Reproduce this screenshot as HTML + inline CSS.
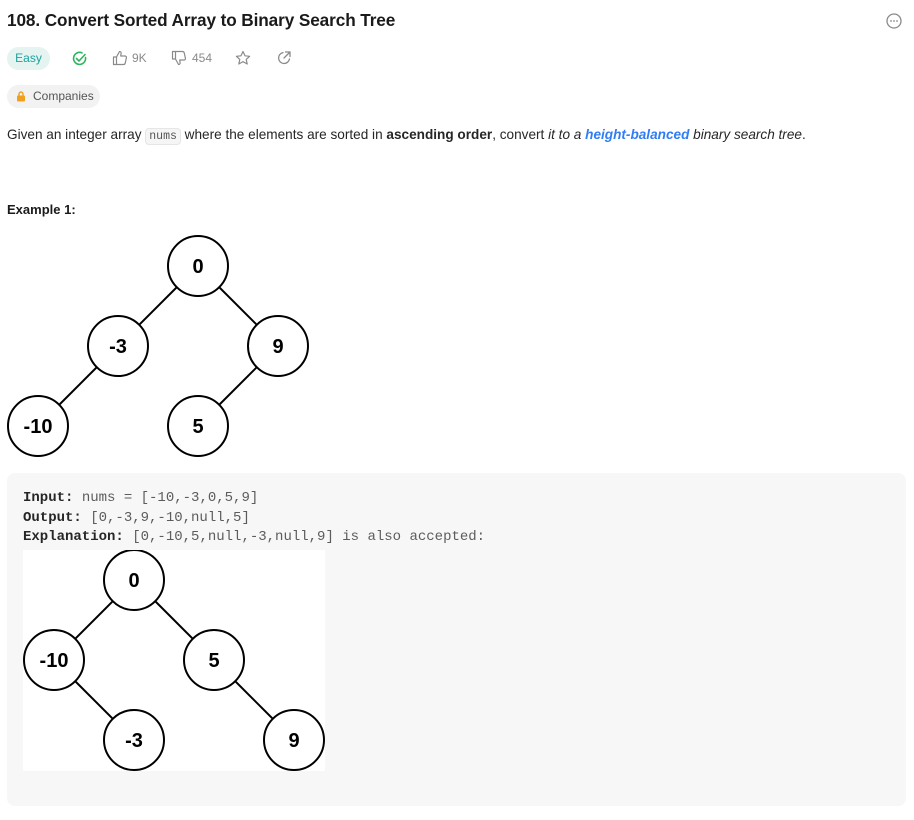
<!DOCTYPE html>
<html><head><meta charset="utf-8"><style>
body{margin:0;background:#fff;font-family:"Liberation Sans",sans-serif;color:#262626;width:914px;height:820px;position:relative;overflow:hidden}
.a{position:absolute}
.title{left:7px;top:10px;font-size:17.2px;font-weight:bold;color:#1a1a1a;letter-spacing:-0.1px}
.easy{left:7px;top:47px;width:43px;height:23px;border-radius:12px;background:#e5f4f0;color:#1ba39c;font-size:12px;line-height:23px;text-align:center}
.ic{color:#8a8a8a;font-size:12px}
.comp{left:7px;top:85px;width:93px;height:23px;border-radius:12px;background:#f2f2f2;font-size:12px;line-height:23px;color:#555}
p{margin:0}
.desc{left:7px;top:127px;font-size:13.6px;white-space:nowrap}
code{font-family:"Liberation Mono",monospace;font-size:11.5px;background:#f5f5f5;border:1px solid #e6e6e6;border-radius:4px;padding:1px 3px;color:#555}
.ex{left:7px;top:202px;font-size:13px;font-weight:bold;color:#1a1a1a}
.pre{left:7px;top:473px;width:899px;height:333px;background:#f7f7f7;border-radius:8px}
.mono{font-family:"Liberation Mono",monospace;font-size:14px;line-height:19.6px;color:#5c5c5c;white-space:pre}
.mono b{color:#262626}
svg text{font-family:"Liberation Sans",sans-serif;font-weight:bold;font-size:20px}
</style></head><body>
<div class="a title">108. Convert Sorted Array to Binary Search Tree</div>
<svg class="a" style="left:885px;top:12px" width="18" height="18" viewBox="0 0 18 18"><circle cx="9" cy="9" r="7" fill="none" stroke="#8a8a8a" stroke-width="1.3"/><circle cx="6" cy="9" r="0.9" fill="#8a8a8a"/><circle cx="9" cy="9" r="0.9" fill="#8a8a8a"/><circle cx="12" cy="9" r="0.9" fill="#8a8a8a"/></svg>
<div class="a easy">Easy</div>
<svg class="a" style="left:71px;top:50px" width="17" height="17" viewBox="0 0 17 17"><path d="M14.5 7.5A6 6 0 1 1 11 2.9" fill="none" stroke="#2db55d" stroke-width="1.6" stroke-linecap="round"/><path d="M5.5 8.5l2.5 2.5 6-6.5" fill="none" stroke="#2db55d" stroke-width="1.6" stroke-linecap="round" stroke-linejoin="round"/></svg>
<svg class="a" style="left:112px;top:50px" width="16" height="16" viewBox="0 0 16 16"><path d="M1.5 7h3v7.5h-3zM4.5 7l3-5.5c1.3 0 1.8.8 1.6 2L8.7 6h4.3c1 0 1.6.8 1.4 1.8l-1.2 5.4c-.2.8-.8 1.3-1.6 1.3H4.5" fill="none" stroke="#8a8a8a" stroke-width="1.2" stroke-linejoin="round"/></svg>
<div class="a ic" style="left:132px;top:51px">9K</div>
<svg class="a" style="left:171px;top:50px" width="16" height="16" viewBox="0 0 16 16"><path d="M1.5 1.5h3V9h-3zM4.5 9l3 5.5c1.3 0 1.8-.8 1.6-2L8.7 10h4.3c1 0 1.6-.8 1.4-1.8L13.2 2.8c-.2-.8-.8-1.3-1.6-1.3H4.5" fill="none" stroke="#8a8a8a" stroke-width="1.2" stroke-linejoin="round"/></svg>
<div class="a ic" style="left:192px;top:51px">454</div>
<svg class="a" style="left:235px;top:50px" width="16" height="16" viewBox="0 0 16 16"><path d="M8 1.5l2 4.3 4.6.5-3.4 3.1 1 4.6L8 11.6 3.8 14l1-4.6L1.4 6.3 6 5.8z" fill="none" stroke="#8a8a8a" stroke-width="1.2" stroke-linejoin="round"/></svg>
<svg class="a" style="left:276px;top:50px" width="16" height="16" viewBox="0 0 16 16"><path d="M13.5 9A5.5 5.5 0 1 1 7 2.6" fill="none" stroke="#8a8a8a" stroke-width="1.3" stroke-linecap="round"/><path d="M9.5 2h4.5v4.5M14 2L8 8" fill="none" stroke="#8a8a8a" stroke-width="1.3" stroke-linecap="round"/></svg>
<div class="a comp"><svg style="position:absolute;left:9px;top:6px" width="10" height="11" viewBox="0 0 10 11"><rect x="1" y="4.5" width="8" height="6" rx="1" fill="#f0a020"/><path d="M3 4.5V3a2 2 0 0 1 4 0v1.5" fill="none" stroke="#f0a020" stroke-width="1.4"/></svg><span style="position:absolute;left:26px">Companies</span></div>
<div class="a desc">Given an integer array <code>nums</code> where the elements are sorted in <b>ascending order</b>, convert <i>it to a</i> <b style="color:#2f7ef5"><i>height-balanced</i></b> <i>binary search tree</i>.</div>
<div class="a ex">Example 1:</div>
<svg class="a" style="left:0;top:230px" width="320" height="232" viewBox="0 230 320 232" stroke="#000" stroke-width="2" fill="#fff">
<line x1="198" y1="266" x2="118" y2="346"/><line x1="198" y1="266" x2="278" y2="346"/><line x1="118" y1="346" x2="38" y2="426"/><line x1="278" y1="346" x2="198" y2="426"/>
<circle cx="198" cy="266" r="30"/><circle cx="118" cy="346" r="30"/><circle cx="278" cy="346" r="30"/><circle cx="38" cy="426" r="30"/><circle cx="198" cy="426" r="30"/>
<g fill="#000" stroke="none" text-anchor="middle"><text x="198" y="273">0</text><text x="118" y="353">-3</text><text x="278" y="353">9</text><text x="38" y="433">-10</text><text x="198" y="433">5</text></g>
</svg>
<div class="a pre"></div>
<div class="a mono" style="left:23px;top:489px"><b>Input:</b> nums = [-10,-3,0,5,9]
<b>Output:</b> [0,-3,9,-10,null,5]
<b>Explanation:</b> [0,-10,5,null,-3,null,9] is also accepted:</div>
<svg class="a" style="left:23px;top:550px" width="302" height="221" viewBox="23 550 302 221" stroke="#000" stroke-width="2" fill="#fff">
<rect x="23" y="550" width="302" height="221" stroke="none"/>
<line x1="134" y1="580" x2="54" y2="660"/><line x1="134" y1="580" x2="214" y2="660"/><line x1="54" y1="660" x2="134" y2="740"/><line x1="214" y1="660" x2="294" y2="740"/>
<circle cx="134" cy="580" r="30"/><circle cx="54" cy="660" r="30"/><circle cx="214" cy="660" r="30"/><circle cx="134" cy="740" r="30"/><circle cx="294" cy="740" r="30"/>
<g fill="#000" stroke="none" text-anchor="middle"><text x="134" y="587">0</text><text x="54" y="667">-10</text><text x="214" y="667">5</text><text x="134" y="747">-3</text><text x="294" y="747">9</text></g>
</svg>
</body></html>
